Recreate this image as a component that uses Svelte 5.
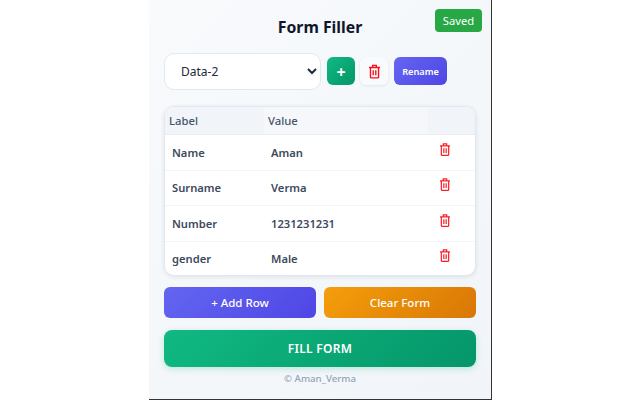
<script>
  let profile = $state('Data-2');
  let rows = $state([
    { label: 'Name', value: 'Aman' },
    { label: 'Surname', value: 'Verma' },
    { label: 'Number', value: '1231231231' },
    { label: 'gender', value: 'Male' }
  ]);
</script>

{#snippet trash(w, h)}
  <svg width={w} height={h} viewBox="0 0 12 15" fill="none" stroke="currentColor" stroke-width="1.5" aria-hidden="true">
    <path d="M0 3.2h12M4 3V.8h4V3M1.6 3.2v10.6a.6.6 0 0 0 .6.6h7.6a.6.6 0 0 0 .6-.6V3.2" />
    <path d="M4.6 6v5.6M7.4 6v5.6" />
  </svg>
{/snippet}

<div class="page">
  <main class="panel">
    <span class="saved">Saved</span>
    <h1>Form Filler</h1>

    <div class="profile-bar">
      <select bind:value={profile}>
        <option>Data-1</option>
        <option>Data-2</option>
      </select>
      <button class="square add">+</button>
      <button class="square remove" aria-label="Delete profile">{@render trash(11, 15)}</button>
      <button class="rename">Rename</button>
    </div>

    <div class="table-card">
      <table>
        <thead>
          <tr>
            <th class="col-label">Label</th>
            <th class="col-value">Value</th>
            <th></th>
          </tr>
        </thead>
        <tbody>
          {#each rows as row}
            <tr>
              <td>{row.label}</td>
              <td>{row.value}</td>
              <td class="cell-del"><button class="row-del" aria-label="Delete row">{@render trash(10, 13)}</button></td>
            </tr>
          {/each}
        </tbody>
      </table>
    </div>

    <div class="actions">
      <button class="action indigo">+ Add Row</button>
      <button class="action amber">Clear Form</button>
    </div>
    <button class="fill">FILL FORM</button>
    <p class="credit">© Aman_Verma</p>
  </main>
</div>

<style>
  :global(body) { background: #fff; }
  .page { display: flex; justify-content: center; height: 400px; overflow: hidden; font-family: "Noto Sans", "Open Sans", sans-serif; }
  .panel { position: relative; box-sizing: border-box; width: 343px; height: 400px; margin-left: 1px; padding: 0 15px; background: linear-gradient(135deg, #f8fafc, #f1f5f9); border-right: 1px solid #333; border-bottom: 1px solid #333; }
  .saved { position: absolute; top: 9px; right: 9px; width: 47px; height: 23px; border-radius: 4px; background: #28a745; color: #fff; font-size: 11.2px; line-height: 23px; text-align: center; }
  h1 { margin: 0 0 14px; padding-top: 14px; height: 39px; box-sizing: border-box; color: #0f172a; font-size: 15.8px; font-weight: 700; line-height: 26px; text-align: center; }
  .profile-bar { display: flex; align-items: center; gap: 6px; height: 36px; }
  select { box-sizing: border-box; width: 157px; height: 37px; padding: 0 12px; border: 1px solid #e2e8f0; border-radius: 10px; background: #fff; color: #1e293b; font: 400 12px "Noto Sans", sans-serif; }
  button { border: 0; font-family: inherit; cursor: pointer; }
  .square { display: flex; align-items: center; justify-content: center; width: 28px; height: 28px; padding: 0; border-radius: 6px; }
  .add { padding-top: 2px; background: linear-gradient(135deg, #10b981, #059669); color: #fff; font-size: 16px; font-weight: 700; }
  .remove { margin-left: -1px; background: #f8fafc; color: #fb0f18; box-shadow: 0 1px 3px rgba(15, 23, 42, .08); }
  .rename { width: 53px; height: 28px; padding: 0; border-radius: 6px; background: linear-gradient(135deg, #6366f1, #4f46e5); color: #fff; font-size: 9.2px; font-weight: 600; }
  .table-card { box-sizing: border-box; margin-top: 17px; width: 312px; height: 170px; border: 1px solid #e2e8f0; border-radius: 10px; background: #fff; overflow: hidden; box-shadow: 0 1px 4px rgba(15, 23, 42, .1); }
  table { width: 100%; border-collapse: collapse; table-layout: fixed; }
  th { height: 27px; padding: 0 4px; background: #f1f5f9; color: #475569; font-size: 11.3px; font-weight: 500; text-align: left; border-bottom: 1px solid #e9eef4; }
  .col-label { width: 91px; }
  .col-value { width: 156px; background: #f5f7fa; }
  td { height: 34.5px; padding: 0 7px; border-bottom: 1px solid #f1f5f9; color: #3d4a5e; font-size: 11.2px; font-weight: 600; }
  tr:last-child td { border-bottom: 0; }
  .cell-del { padding: 0; }
  .row-del { display: block; width: 10px; margin: -3px 0 0 12px; padding: 0; background: none; color: #f9222c; }
  .actions { display: grid; grid-template-columns: 1fr 1fr; gap: 8px; margin-top: 11px; }
  .action { height: 31px; padding: 0; border-radius: 6px; color: #fff; font-size: 11.5px; font-weight: 500; }
  .indigo { background: linear-gradient(135deg, #6366f1, #4f46e5); }
  .amber { background: linear-gradient(135deg, #f59e0b, #d97706); }
  .fill { display: block; width: 100%; height: 37px; margin-top: 12px; padding: 0; border-radius: 8px; background: linear-gradient(135deg, #10b981, #059669); color: #fff; font-size: 12px; font-weight: 600; letter-spacing: .3px; box-shadow: 0 2px 6px rgba(16, 185, 129, .25); }
  .credit { margin: 5px 0 0; color: #94a3b8; font-size: 9.7px; font-weight: 500; line-height: 14px; text-align: center; }
</style>
